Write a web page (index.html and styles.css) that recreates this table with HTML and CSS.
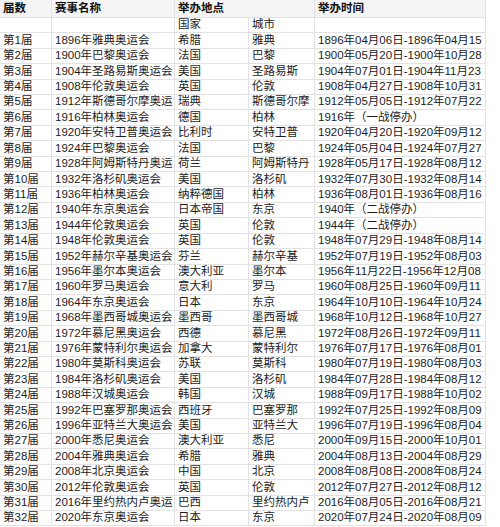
FILE: index.html
```html
<!DOCTYPE html>
<html lang="zh">
<head>
<meta charset="utf-8">
<title>历届奥运会</title>
<link rel="stylesheet" href="styles.css">
</head>
<body>
<div class="sheet">
  <div class="c h">届数</div>
  <div class="c h">赛事名称</div>
  <div class="c h span2">举办地点</div>
  <div class="c h">举办时间</div>

  <div class="c"></div><div class="c"></div><div class="c">国家</div><div class="c">城市</div><div class="c"></div>

  <div class="c">第1届</div><div class="c">1896年雅典奥运会</div><div class="c">希腊</div><div class="c">雅典</div><div class="c">1896年04月06日-1896年04月15</div>
  <div class="c">第2届</div><div class="c">1900年巴黎奥运会</div><div class="c">法国</div><div class="c">巴黎</div><div class="c">1900年05月20日-1900年10月28</div>
  <div class="c">第3届</div><div class="c">1904年圣路易斯奥运会</div><div class="c">美国</div><div class="c">圣路易斯</div><div class="c">1904年07月01日-1904年11月23</div>
  <div class="c">第4届</div><div class="c">1908年伦敦奥运会</div><div class="c">英国</div><div class="c">伦敦</div><div class="c">1908年04月27日-1908年10月31</div>
  <div class="c">第5届</div><div class="c">1912年斯德哥尔摩奥运</div><div class="c">瑞典</div><div class="c">斯德哥尔摩</div><div class="c">1912年05月05日-1912年07月22</div>
  <div class="c">第6届</div><div class="c">1916年柏林奥运会</div><div class="c">德国</div><div class="c">柏林</div><div class="c">1916年（一战停办）</div>
  <div class="c">第7届</div><div class="c">1920年安特卫普奥运会</div><div class="c">比利时</div><div class="c">安特卫普</div><div class="c">1920年04月20日-1920年09月12</div>
  <div class="c">第8届</div><div class="c">1924年巴黎奥运会</div><div class="c">法国</div><div class="c">巴黎</div><div class="c">1924年05月04日-1924年07月27</div>
  <div class="c">第9届</div><div class="c">1928年阿姆斯特丹奥运</div><div class="c">荷兰</div><div class="c">阿姆斯特丹</div><div class="c">1928年05月17日-1928年08月12</div>
  <div class="c">第10届</div><div class="c">1932年洛杉矶奥运会</div><div class="c">美国</div><div class="c">洛杉矶</div><div class="c">1932年07月30日-1932年08月14</div>
  <div class="c">第11届</div><div class="c">1936年柏林奥运会</div><div class="c">纳粹德国</div><div class="c">柏林</div><div class="c">1936年08月01日-1936年08月16</div>
  <div class="c">第12届</div><div class="c">1940年东京奥运会</div><div class="c">日本帝国</div><div class="c">东京</div><div class="c">1940年（二战停办）</div>
  <div class="c">第13届</div><div class="c">1944年伦敦奥运会</div><div class="c">英国</div><div class="c">伦敦</div><div class="c">1944年（二战停办）</div>
  <div class="c">第14届</div><div class="c">1948年伦敦奥运会</div><div class="c">英国</div><div class="c">伦敦</div><div class="c">1948年07月29日-1948年08月14</div>
  <div class="c">第15届</div><div class="c">1952年赫尔辛基奥运会</div><div class="c">芬兰</div><div class="c">赫尔辛基</div><div class="c">1952年07月19日-1952年08月03</div>
  <div class="c">第16届</div><div class="c">1956年墨尔本奥运会</div><div class="c">澳大利亚</div><div class="c">墨尔本</div><div class="c">1956年11月22日-1956年12月08</div>
  <div class="c">第17届</div><div class="c">1960年罗马奥运会</div><div class="c">意大利</div><div class="c">罗马</div><div class="c">1960年08月25日-1960年09月11</div>
  <div class="c">第18届</div><div class="c">1964年东京奥运会</div><div class="c">日本</div><div class="c">东京</div><div class="c">1964年10月10日-1964年10月24</div>
  <div class="c">第19届</div><div class="c">1968年墨西哥城奥运会</div><div class="c">墨西哥</div><div class="c">墨西哥城</div><div class="c">1968年10月12日-1968年10月27</div>
  <div class="c">第20届</div><div class="c">1972年慕尼黑奥运会</div><div class="c">西德</div><div class="c">慕尼黑</div><div class="c">1972年08月26日-1972年09月11</div>
  <div class="c">第21届</div><div class="c">1976年蒙特利尔奥运会</div><div class="c">加拿大</div><div class="c">蒙特利尔</div><div class="c">1976年07月17日-1976年08月01</div>
  <div class="c">第22届</div><div class="c">1980年莫斯科奥运会</div><div class="c">苏联</div><div class="c">莫斯科</div><div class="c">1980年07月19日-1980年08月03</div>
  <div class="c">第23届</div><div class="c">1984年洛杉矶奥运会</div><div class="c">美国</div><div class="c">洛杉矶</div><div class="c">1984年07月28日-1984年08月12</div>
  <div class="c">第24届</div><div class="c">1988年汉城奥运会</div><div class="c">韩国</div><div class="c">汉城</div><div class="c">1988年09月17日-1988年10月02</div>
  <div class="c">第25届</div><div class="c">1992年巴塞罗那奥运会</div><div class="c">西班牙</div><div class="c">巴塞罗那</div><div class="c">1992年07月25日-1992年08月09</div>
  <div class="c">第26届</div><div class="c">1996年亚特兰大奥运会</div><div class="c">美国</div><div class="c">亚特兰大</div><div class="c">1996年07月19日-1996年08月04</div>
  <div class="c">第27届</div><div class="c">2000年悉尼奥运会</div><div class="c">澳大利亚</div><div class="c">悉尼</div><div class="c">2000年09月15日-2000年10月01</div>
  <div class="c">第28届</div><div class="c">2004年雅典奥运会</div><div class="c">希腊</div><div class="c">雅典</div><div class="c">2004年08月13日-2004年08月29</div>
  <div class="c">第29届</div><div class="c">2008年北京奥运会</div><div class="c">中国</div><div class="c">北京</div><div class="c">2008年08月08日-2008年08月24</div>
  <div class="c">第30届</div><div class="c">2012年伦敦奥运会</div><div class="c">英国</div><div class="c">伦敦</div><div class="c">2012年07月27日-2012年08月12</div>
  <div class="c">第31届</div><div class="c">2016年里约热内卢奥运</div><div class="c">巴西</div><div class="c">里约热内卢</div><div class="c">2016年08月05日-2016年08月21</div>
  <div class="c">第32届</div><div class="c">2020年东京奥运会</div><div class="c">日本</div><div class="c">东京</div><div class="c">2020年07月24日-2020年08月09</div>
</div>
</body>
</html>
```

FILE: styles.css
```css
html, body {
  margin: 0;
  padding: 0;
  background: #ffffff;
}

.sheet {
  display: grid;
  grid-template-columns: 52px 123px 74px 66px 171px;
  grid-template-rows: 18px;
  grid-auto-rows: 15.42px;
  width: 486px;
  font-family: "Liberation Sans", "Noto Sans CJK SC", sans-serif;
  font-size: 11.5px;
  color: #1c1c1c;
}

.c {
  box-sizing: border-box;
  border-right: 1px solid #e2e2e2;
  border-bottom: 1px solid #e2e2e2;
  padding: 0 1px 0 3px;
  white-space: nowrap;
  overflow: hidden;
  display: flex;
  align-items: center;
  line-height: 1;
}

.h {
  background: #f4f4f4;
  font-weight: bold;
  color: #111111;
}

.span2 {
  grid-column: span 2;
}
```
